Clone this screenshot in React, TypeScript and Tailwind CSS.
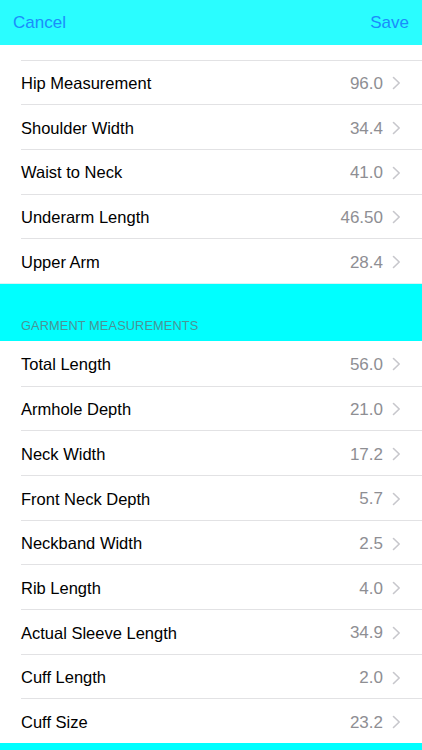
import React from "react";

const body = [
  ["Hip Measurement", "96.0"],
  ["Shoulder Width", "34.4"],
  ["Waist to Neck", "41.0"],
  ["Underarm Length", "46.50"],
  ["Upper Arm", "28.4"],
];

const garment = [
  ["Total Length", "56.0"],
  ["Armhole Depth", "21.0"],
  ["Neck Width", "17.2"],
  ["Front Neck Depth", "5.7"],
  ["Neckband Width", "2.5"],
  ["Rib Length", "4.0"],
  ["Actual Sleeve Length", "34.9"],
  ["Cuff Length", "2.0"],
  ["Cuff Size", "23.2"],
];

function Chevron() {
  return (
    <svg width="9" height="14" viewBox="0 0 9 14" className="ml-[9px] shrink-0">
      <path d="M1.5 1.5 L7.2 7 L1.5 12.5" fill="none" stroke="#c7c7cc" strokeWidth="1.6" strokeLinecap="round" strokeLinejoin="round" />
    </svg>
  );
}

function Row({ label, value, border }: { label: string; value: string; border: boolean }) {
  return (
    <div className="pl-[21px] bg-white">
      <div
        className={
          "h-[44.7px] flex items-center pr-[21px] pt-[2px] box-border " +
          (border ? "border-t border-[#e2e2e4]" : "")
        }
      >
        <span className="flex-1 text-[16.5px] text-black leading-none">{label}</span>
        <span className="text-[17px] text-[#8e8e93] leading-none">{value}</span>
        <Chevron />
      </div>
    </div>
  );
}

export default function App() {
  return (
    <div
      className="w-[422px] h-[750px] overflow-hidden bg-white flex flex-col"
      style={{ fontFamily: '"Liberation Sans", Arial, sans-serif' }}
    >
      <div className="h-[45px] shrink-0 bg-[#2afdff] flex items-center justify-between px-[13px] text-[17px] text-[#1a8cfb]">
        <span>Cancel</span>
        <span>Save</span>
      </div>
      <div className="h-[14.5px] shrink-0 bg-white" />
      {body.map(([l, v]) => (
        <Row key={l} label={l} value={v} border={true} />
      ))}
      <div className="h-[58px] shrink-0 bg-[#00ffff] flex items-end px-[21px] pb-[7px] border-t border-[#d8f4f4]">
        <span className="text-[12.8px] leading-[16px] text-[#4a9496] tracking-[0.1px]">GARMENT MEASUREMENTS</span>
      </div>
      {garment.map(([l, v], i) => (
        <Row key={l} label={l} value={v} border={i !== 0} />
      ))}
      <div className="flex-1 bg-[#00ffff]" />
    </div>
  );
}
